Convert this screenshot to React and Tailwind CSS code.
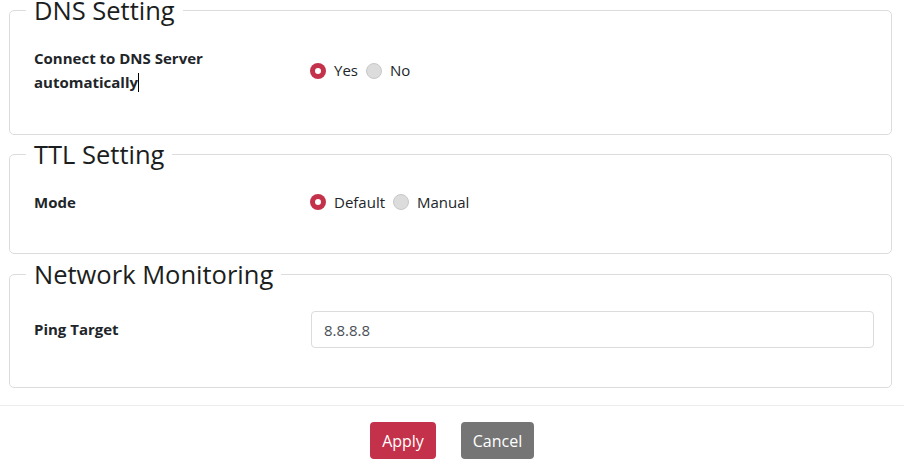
import React from "react";

const font = { fontFamily: '"Open Sans", "Noto Sans", sans-serif' };

function Radio({ checked, label }) {
  return (
    <label className="flex items-center gap-2 mr-2">
      {checked ? (
        <span className="w-4 h-4 rounded-full bg-[#c4314b] flex items-center justify-center">
          <span className="w-[6px] h-[6px] rounded-full bg-white" />
        </span>
      ) : (
        <span className="w-4 h-4 rounded-full bg-[#dcdcdc] border border-[#c8c8c8]" />
      )}
      <span className="text-[15px] text-[#212529]">{label}</span>
    </label>
  );
}

function Section({ title, children, className = "" }) {
  return (
    <fieldset className={`border border-[#dcdcdc] rounded-[5px] ml-[9px] mr-[12px] px-6 ${className}`}>
      <legend className="px-2 -ml-2 text-[25.5px] leading-[20px] text-[#1b1e21]">{title}</legend>
      {children}
    </fieldset>
  );
}

export default function App() {
  return (
    <div className="w-[904px] h-[466px] bg-white overflow-hidden" style={font}>
      <Section title="DNS Setting" className="pt-[26px] pb-[40px]">
        <div className="flex items-center">
          <div className="w-[276px] text-[15px] leading-[24px] font-bold text-[#212529]">
            <div className="max-w-[200px]">
              Connect to DNS Server automatically
              <span className="inline-block w-px h-[19px] bg-black align-[-4px]" />
            </div>
          </div>
          <div className="flex items-center pt-[1px]">
            <Radio checked label="Yes" />
            <Radio label="No" />
          </div>
        </div>
      </Section>

      <Section title="TTL Setting" className="mt-[9px] pt-[26px] pb-[39px]">
        <div className="flex items-center h-[24px]">
          <div className="w-[276px] text-[15px] font-bold text-[#212529]">Mode</div>
          <div className="flex items-center">
            <Radio checked label="Default" />
            <Radio label="Manual" />
          </div>
        </div>
      </Section>

      <Section title="Network Monitoring" className="mt-[10px] pt-[27px] pb-[39px]">
        <div className="flex items-center">
          <div className="w-[277px] text-[15px] font-bold text-[#212529]">Ping Target</div>
          <input
            readOnly
            value="8.8.8.8"
            className="flex-1 mr-[-7px] h-[37px] border border-[#dcdcdc] rounded-[4px] px-3 text-[15px] text-[#495057] outline-none"
          />
        </div>
      </Section>

      <div className="mt-[17px] border-t border-[#ececec] flex justify-center gap-[25px] pt-[16px]">
        <button className="w-[66px] h-[37px] rounded-[4px] bg-[#c4314b] text-white text-[16px]">Apply</button>
        <button className="w-[73px] h-[37px] rounded-[4px] bg-[#757575] text-white text-[16px]">Cancel</button>
      </div>
    </div>
  );
}
